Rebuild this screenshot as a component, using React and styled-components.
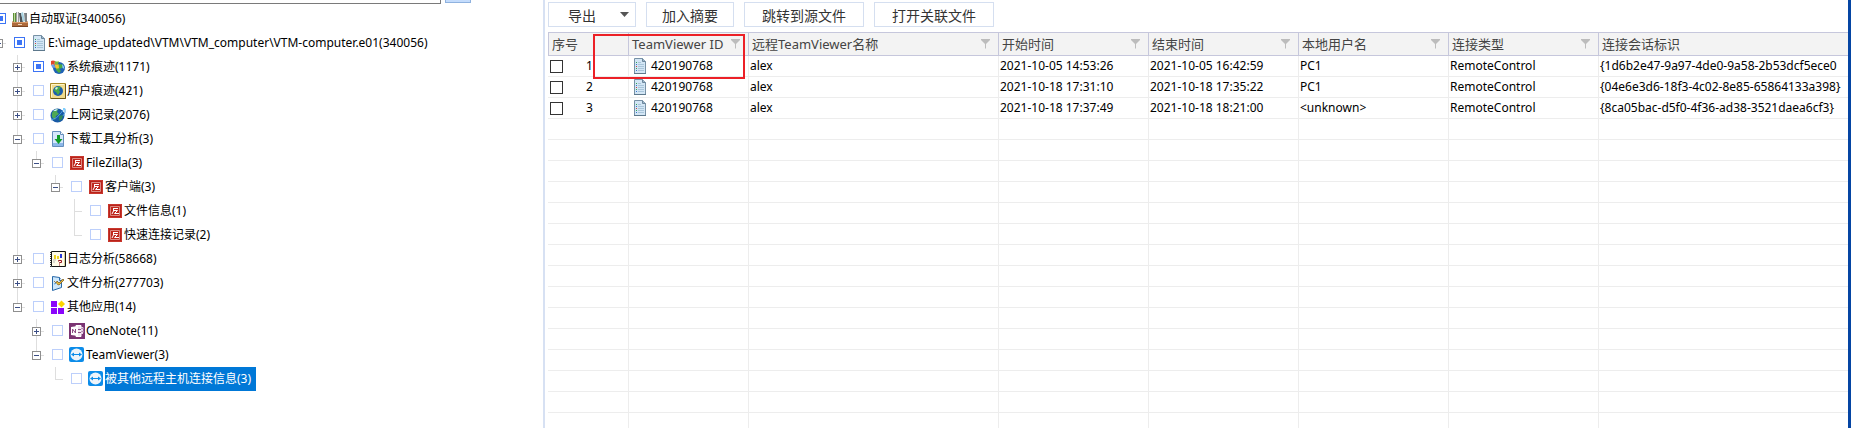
import React from "react";
import styled, { createGlobalStyle, css } from "styled-components";

const GlobalStyle = createGlobalStyle`
  * { box-sizing: border-box; }
  html, body { margin: 0; background: #fff; overflow: hidden; }
  body, button, input {
    font-family: "Noto Sans", "Noto Sans CJK SC", sans-serif;
    font-size: 12px;
    color: #000;
  }
`;

const Window = styled.div`
  display: flex;
  height: 100vh;
  padding-right: 6px;
  overflow: hidden;
`;

const TreePane = styled.aside`
  flex: 0 0 543px;
  overflow: hidden;
`;

const SearchBar = styled.form`
  display: flex;
  align-items: flex-start;
  gap: 4px;
  height: 28px;
  margin-top: -24px;
`;

const SearchInput = styled.input`
  width: 441px;
  height: 28px;
  padding: 0 4px;
  border: 1px solid #7a7a7a;
  border-left: 0;
  outline: 0;
`;

const SearchButton = styled.button`
  width: 26px;
  height: 27px;
  padding: 0;
  border: 1px solid #8fb2df;
  background: #c4dcfc;
`;

const Tree = styled.ul`
  list-style: none;
  margin: 3px 0 0 -30px;
  padding: 0;
`;

const TreeRow = styled.li`
  display: flex;
  align-items: center;
  height: 24px;
  white-space: nowrap;
`;

const line = "linear-gradient(#dedede, #dedede)";
const guides = {
  none: css``,
  through: css`
    background: ${line} 9px 0 / 1px 100% no-repeat;
  `,
  branch: css`
    background: ${line} 9px 0 / 1px 100% no-repeat, ${line} 9px 12px / 8px 1px no-repeat;
  `,
  end: css`
    background: ${line} 9px 0 / 1px 12px no-repeat, ${line} 9px 12px / 8px 1px no-repeat;
  `,
  tick: css`
    background: ${line} 9px 12px / 8px 1px no-repeat;
  `,
};

const GuideCell = styled.span`
  display: flex;
  flex: none;
  width: 19px;
  height: 24px;
  padding: 8px 5px;
  ${(p) => guides[p.$kind]}
`;

const glyph = "linear-gradient(#3c4f86, #3c4f86)";
const Expander = styled.button`
  width: 9px;
  height: 9px;
  padding: 0;
  border: 1px solid #8f8f8f;
  background: ${glyph} 1px 3px / 5px 1px no-repeat,
    ${(p) => (p.$open ? "" : `${glyph} 3px 1px / 1px 5px no-repeat,`)} #fff;
`;

const NodeLabel = styled.label`
  display: flex;
  align-items: center;
  height: 24px;
  margin-left: 6px;
`;

const NodeCheck = styled.input`
  appearance: none;
  width: 11px;
  height: 11px;
  margin: 0 6px 1px 0;
  border: 1px solid ${(p) => (p.$partial ? "#3c74f5" : "#bccffb")};
  background: ${(p) =>
    p.$partial ? "linear-gradient(#3c74f5, #3c74f5) 2px 2px / 5px 5px no-repeat" : "#fff"};
`;

const NodeText = styled.span`
  height: 24px;
  margin-left: 1px;
  padding-right: 5px;
  line-height: 24px;
  ${(p) => p.$selected && css`
    background: #0078d7;
    color: #fff;
  `}
`;

const Icon = styled.svg`
  display: block;
  flex: none;
`;

const DataPane = styled.main`
  flex: 1;
  min-width: 0;
  padding: 2px 0 0 3px;
  border-left: 2px solid #d7e1f3;
  border-right: 3px solid #0545a3;
  overflow: hidden;
`;

const Toolbar = styled.div`
  display: flex;
  gap: 10px;
  margin-bottom: 5px;
`;

const ToolButton = styled.button`
  display: flex;
  align-items: center;
  justify-content: ${(p) => (p.$menu ? "space-between" : "center")};
  width: ${(p) => (p.$wide ? 120 : 88)}px;
  height: 25px;
  padding: ${(p) => (p.$menu ? "0 6px 0 19px" : 0)};
  border: 1px solid #d5dff0;
  background: #fff;
  color: #333;
  font-size: 14px;
`;

const TableFrame = styled.div`
  position: relative;
`;

const Table = styled.table`
  width: 100%;
  table-layout: fixed;
  border-collapse: separate;
  border-spacing: 0;
`;

const Col = styled.col`
  width: ${(p) => (p.$width ? `${p.$width}px` : "auto")};
`;

const HeadCell = styled.th`
  height: 24px;
  padding: 0 8px 0 3px;
  border: solid #c6c7dc;
  border-width: 1px 1px 1px 0;
  background: #f3f3f3;
  color: #444;
  font-size: 13px;
  font-weight: 400;
  line-height: 22px;
  text-align: left;
  white-space: nowrap;
  &:first-child { border-left-width: 1px; }
  &:last-child { border-right-width: 0; }
`;

const HeadContent = styled.div`
  display: flex;
  align-items: center;
  justify-content: space-between;
`;

const Cell = styled.td`
  height: 21px;
  padding: 0 0 0 ${(p) => p.$inset || 1}px;
  border: solid #ededed;
  border-width: 0 1px 1px 0;
  line-height: 20px;
  white-space: nowrap;
  overflow: hidden;
  &:last-child { border-right-width: 0; }
`;

const CellContent = styled.div`
  display: flex;
  align-items: center;
  gap: 4px;
  height: 20px;
`;

const RowLabel = styled.label`
  display: flex;
  align-items: center;
  gap: 23px;
  height: 20px;
`;

const RowCheck = styled.input`
  appearance: none;
  width: 13px;
  height: 13px;
  margin: 0;
  border: 1px solid #333;
  background: #fff;
`;

const Highlight = styled.div`
  position: absolute;
  top: 2px;
  left: 45px;
  width: 152px;
  height: 45px;
  border: 2px solid #ec2027;
  pointer-events: none;
`;

function DocIcon({ width = 14 }) {
  return (
    <Icon width={width} height="16" viewBox="0 0 14 16">
      <path d="M1.5.5h8l3 3v12h-11z" fill="#d3e6f5" stroke="#7791a6" />
      <path d="M9.500.5v3h3" fill="#9fb9cc" stroke="#6c879c" />
      <path d="M3 4.500h1M3 10.500h1" stroke="#35a653" />
      <path d="M3 6.500h1M3 12.500h1" stroke="#3a74d0" />
      <path d="M3 8.500h1" stroke="#d1423b" />
      <path d="M5 4.500h3M5 6.500h6M5 8.500h6M5 10.500h6M5 12.500h6" stroke="#a9c5da" />
      <path d="M1 15.500h12" stroke="#5d788c" />
    </Icon>
  );
}

const icons = {
  archive: (
    <Icon width="16" height="16" viewBox="0 0 16 16">
      <path d="M1 2h3v9H1z" fill="#5d8f38" />
      <path d="M2 2h1v9H2z" fill="#bcd79a" />
      <path d="M4 1h3v10H4z" fill="#9b9d9f" />
      <path d="M5 1h1v10H5z" fill="#f0f0ee" />
      <path d="M7 2h2l2 9H8z" fill="#4c5358" />
      <path d="M9 2l2-1 2 9-2 1z" fill="#a8d3e2" />
      <path d="M12 2h3v9h-2z" fill="#7d8285" />
      <path d="M1 10l1 1h12l1-1 1 1v4H0v-4z" fill="#ad6a3c" />
      <path d="M0 11h16v1H0z" fill="#d99a68" />
      <path d="M6 13h4v1H6z" fill="#f2d7bb" />
      <path d="M0 15h16v1H0z" fill="#7b4525" />
    </Icon>
  ),
  doc: <DocIcon width={16} />,
  system: (
    <Icon width="16" height="16" viewBox="0 0 16 16">
      <circle cx="9" cy="9" r="6" fill="#1e62b4" />
      <path d="M6 7q4-3 7-1l-1 3-3 1 2 2-2 2-3-3z" fill="#4bab41" />
      <path d="M12 5q2.500 2 2.500 5l-2-1z" fill="#8fcdf2" />
      <path d="M1 2q2-1 4 0l-.500 4q-2-1-3.500 0z" fill="#e2452c" />
      <path d="M5 2q2 1 4 0L8 5q-2 1-3.500 0z" fill="#79b83c" />
      <path d="M1 6q2-1 3.500 0l1 3q-2-1-3 0z" fill="#6f9fe6" />
      <path d="M4.500 5q2 1 4 0L9 9q-2 1-3.500 0z" fill="#f6c62e" />
    </Icon>
  ),
  user: (
    <Icon width="16" height="16" viewBox="0 0 16 16">
      <path d="M.5.500h15v15H.500z" fill="#f1dc8d" stroke="#ab8b27" />
      <path d="M1.500 14V1.500H14" fill="none" stroke="#fff5c8" />
      <path d="M15.500 1v14.500H1" fill="none" stroke="#6d5817" />
      <circle cx="8" cy="8" r="5" fill="#1c5eae" />
      <path d="M5 5q3-2.500 6-1L9 7l1 2-2 3-2-3-2-1z" fill="#49aa48" />
      <path d="M5 5l2-1 1 1-2 2z" fill="#d5f3dd" />
    </Icon>
  ),
  web: (
    <Icon width="16" height="16" viewBox="0 0 16 16">
      <circle cx="7.500" cy="8.500" r="7" fill="#185aa5" />
      <path d="M2 6q2-4 6-4L7 5l2 2-3 2-1 4-3-3z" fill="#4ea853" />
      <path d="M9 9l4-1-1 4-3 2z" fill="#2f8a56" />
      <path d="M3 4q2-2 5-2L6 4z" fill="#cfeeff" />
      <path d="M1 13Q7 12 11 6t4-4q1 3-2 7" fill="none" stroke="#4d9fe0" />
      <path d="M13 1h2v2h-2z" fill="#7fd0ff" />
    </Icon>
  ),
  download: (
    <Icon width="16" height="16" viewBox="0 0 16 16">
      <path d="M2.500.500h8l3 3v12h-11z" fill="#d6e7fb" stroke="#668fbd" />
      <path d="M10.500.500v3h3" fill="#fff" stroke="#668fbd" />
      <path d="M3 12h10v3H3z" fill="#8cb7e8" />
      <path d="M7 4h3v4h2.500L8.500 13 4.500 8H7z" fill="#109c28" />
    </Icon>
  ),
  filezilla: (
    <Icon width="16" height="16" viewBox="0 0 16 16">
      <path d="M1 1h14v14H1z" fill="#b8231b" />
      <path d="M1.500 1.500h13v13h-13z" fill="none" stroke="#c9372d" />
      <path d="M3.500 3.500h9v9h-9z" fill="#c0281e" stroke="#dd8b83" />
      <path d="M6.500 5v3L5 11M6 5.500h5M7 7.500h3.500L7.500 10.500H12" fill="none" stroke="#fff" />
    </Icon>
  ),
  log: (
    <Icon width="16" height="16" viewBox="0 0 16 16">
      <path d="M1.500.500h14v15h-14z" fill="#fffbe9" stroke="#151515" />
      <path d="M.500 1v15" stroke="#333" strokeDasharray="1 1" />
      <path d="M14.500 1v14" stroke="#d8cf9a" />
      <path d="M5 4v4M8 5v3" stroke="#efd421" strokeWidth="2" />
      <path d="M3 9h3M3 11h2" stroke="#bbb" />
      <path d="M11 3v4M10 4h1" stroke="#2538d8" strokeWidth="2" />
      <path d="M8.500 10.500v-1h3v2h-2v1M9 14h1" fill="none" stroke="#9b1520" />
    </Icon>
  ),
  file: (
    <Icon width="16" height="16" viewBox="0 0 16 16">
      <path d="M2.500 1.500l7 1 2 3v7l-9 3z" fill="#cde7fb" stroke="#2768a8" />
      <path d="M9.500 2.500v3h2" fill="#fff" stroke="#2768a8" />
      <path d="M4 9l3-1" fill="none" stroke="#5b9ed6" />
      <path d="M4 6l2 2 1-2 2 2 4-4 1 1-5 5-2-1" fill="#e7bb3b" stroke="#74531a" strokeWidth=".700" />
    </Icon>
  ),
  apps: (
    <Icon width="16" height="16" viewBox="0 0 16 16">
      <path d="M1 2h6v6H1zM1 9h6v6H1zM8 9h6v6H8z" fill="#8a05fb" />
      <path d="M11.500 1.500L15 5l-3.500 3.500L8 5z" fill="#fdd400" />
    </Icon>
  ),
  onenote: (
    <Icon width="16" height="16" viewBox="0 0 16 16">
      <path d="M0 0h16v16H0z" fill="#7b3473" />
      <path d="M7 2.500h5v11H7z" fill="#f1e4f0" stroke="#fff" />
      <path d="M12 4.500h2v2h-2M12 7.500h2v2h-2M12 10.500h2" fill="none" stroke="#e9d6e7" />
      <path d="M2 4l7-1v10l-7-1z" fill="#fff" />
      <path d="M3.500 10V6l3 4V6M9 6.500h3M9 9.500h3" fill="none" stroke="#8d4f86" />
    </Icon>
  ),
  teamviewer: (
    <Icon width="16" height="16" viewBox="0 0 16 16">
      <rect x="0" y="0" width="15" height="15" rx="2" fill="#0c8ce9" />
      <circle cx="7.500" cy="7.500" r="6" fill="#eef4fa" />
      <path d="M2 7.500l3-2V7h5V5.500l3 2-3 2V8H5v1.500z" fill="#0c8ce9" />
    </Icon>
  ),
};

const nodes = [
  { icon: "archive", text: "自动取证(340056)", cells: ["none"], partial: true },
  {
    icon: "doc",
    text: "E:\\image_updated\\VTM\\VTM_computer\\VTM-computer.e01(340056)",
    cells: ["none", "tick"],
    open: true,
    partial: true,
  },
  { icon: "system", text: "系统痕迹(1171)", cells: ["none", "none", "branch"], open: false, partial: true },
  { icon: "user", text: "用户痕迹(421)", cells: ["none", "none", "branch"], open: false },
  { icon: "web", text: "上网记录(2076)", cells: ["none", "none", "branch"], open: false },
  { icon: "download", text: "下载工具分析(3)", cells: ["none", "none", "branch"], open: true },
  { icon: "filezilla", text: "FileZilla(3)", cells: ["none", "none", "through", "end"], open: true },
  { icon: "filezilla", text: "客户端(3)", cells: ["none", "none", "through", "none", "end"], open: true },
  { icon: "filezilla", text: "文件信息(1)", cells: ["none", "none", "through", "none", "none", "branch"] },
  { icon: "filezilla", text: "快速连接记录(2)", cells: ["none", "none", "through", "none", "none", "end"] },
  { icon: "log", text: "日志分析(58668)", cells: ["none", "none", "branch"], open: false },
  { icon: "file", text: "文件分析(277703)", cells: ["none", "none", "branch"], open: false },
  { icon: "apps", text: "其他应用(14)", cells: ["none", "none", "end"], open: true },
  { icon: "onenote", text: "OneNote(11)", cells: ["none", "none", "none", "branch"], open: false },
  { icon: "teamviewer", text: "TeamViewer(3)", cells: ["none", "none", "none", "end"], open: true },
  {
    icon: "teamviewer",
    text: "被其他远程主机连接信息(3)",
    cells: ["none", "none", "none", "none", "end"],
    selected: true,
  },
];

function TreeNode({ node }) {
  const last = node.cells.length - 1;
  return (
    <TreeRow>
      {node.cells.map((kind, i) => (
        <GuideCell key={i} $kind={kind}>
          {i === last && node.open !== undefined && (
            <Expander type="button" $open={node.open} aria-expanded={node.open} aria-label={node.text} />
          )}
        </GuideCell>
      ))}
      <NodeLabel>
        <NodeCheck type="checkbox" $partial={node.partial} />
        {icons[node.icon]}
        <NodeText $selected={node.selected}>{node.text}</NodeText>
      </NodeLabel>
    </TreeRow>
  );
}

const columns = [
  { title: "序号", width: 81 },
  { title: "TeamViewer ID", width: 120, filter: true },
  { title: "远程TeamViewer名称", width: 250, filter: true },
  { title: "开始时间", width: 150, filter: true },
  { title: "结束时间", width: 150, filter: true },
  { title: "本地用户名", width: 150, filter: true },
  { title: "连接类型", width: 150, filter: true },
  { title: "连接会话标识" },
];

const records = [
  ["420190768", "alex", "2021-10-05 14:53:26", "2021-10-05 16:42:59", "PC1", "RemoteControl", "{1d6b2e47-9a97-4de0-9a58-2b53dcf5ece0"],
  ["420190768", "alex", "2021-10-18 17:31:10", "2021-10-18 17:35:22", "PC1", "RemoteControl", "{04e6e3d6-18f3-4c02-8e85-65864133a398}"],
  ["420190768", "alex", "2021-10-18 17:37:49", "2021-10-18 18:21:00", "<unknown>", "RemoteControl", "{8ca05bac-d5f0-4f36-ad38-3521daea6cf3}"],
];

const BLANK_ROWS = 15;

function FilterIcon() {
  return (
    <Icon width="9" height="10" viewBox="0 0 9 10">
      <path d="M0 0h9v1L5 5v4.500H4V5L0 1z" fill="#bcbcbc" />
    </Icon>
  );
}

export default function App() {
  return (
    <>
      <GlobalStyle />
      <Window>
        <TreePane>
          <SearchBar>
            <SearchInput type="text" aria-label="搜索" />
            <SearchButton type="button" aria-label="搜索" />
          </SearchBar>
          <Tree>
            {nodes.map((node) => (
              <TreeNode key={node.text} node={node} />
            ))}
          </Tree>
        </TreePane>
        <DataPane>
          <Toolbar>
            <ToolButton type="button" $menu>
              导出
              <Icon width="9" height="5" viewBox="0 0 9 5">
                <path d="M0 0h9L4.500 5z" fill="#555" />
              </Icon>
            </ToolButton>
            <ToolButton type="button">加入摘要</ToolButton>
            <ToolButton type="button" $wide>跳转到源文件</ToolButton>
            <ToolButton type="button" $wide>打开关联文件</ToolButton>
          </Toolbar>
          <TableFrame>
            <Table>
              <colgroup>
                {columns.map((c) => (
                  <Col key={c.title} $width={c.width} />
                ))}
              </colgroup>
              <thead>
                <tr>
                  {columns.map((c) => (
                    <HeadCell key={c.title}>
                      <HeadContent>
                        {c.title}
                        {c.filter && <FilterIcon />}
                      </HeadContent>
                    </HeadCell>
                  ))}
                </tr>
              </thead>
              <tbody>
                {records.map((record, i) => (
                  <tr key={i}>
                    <Cell $inset={2}>
                      <RowLabel>
                        <RowCheck type="checkbox" />
                        {i + 1}
                      </RowLabel>
                    </Cell>
                    {record.map((value, j) => (
                      <Cell key={j} $inset={j === 0 ? 4 : 1}>
                        <CellContent>
                          {j === 0 && <DocIcon />}
                          {value}
                        </CellContent>
                      </Cell>
                    ))}
                  </tr>
                ))}
                {Array.from({ length: BLANK_ROWS }, (_, i) => (
                  <tr key={i}>
                    {columns.map((c) => (
                      <Cell key={c.title} />
                    ))}
                  </tr>
                ))}
              </tbody>
            </Table>
            <Highlight />
          </TableFrame>
        </DataPane>
      </Window>
    </>
  );
}
